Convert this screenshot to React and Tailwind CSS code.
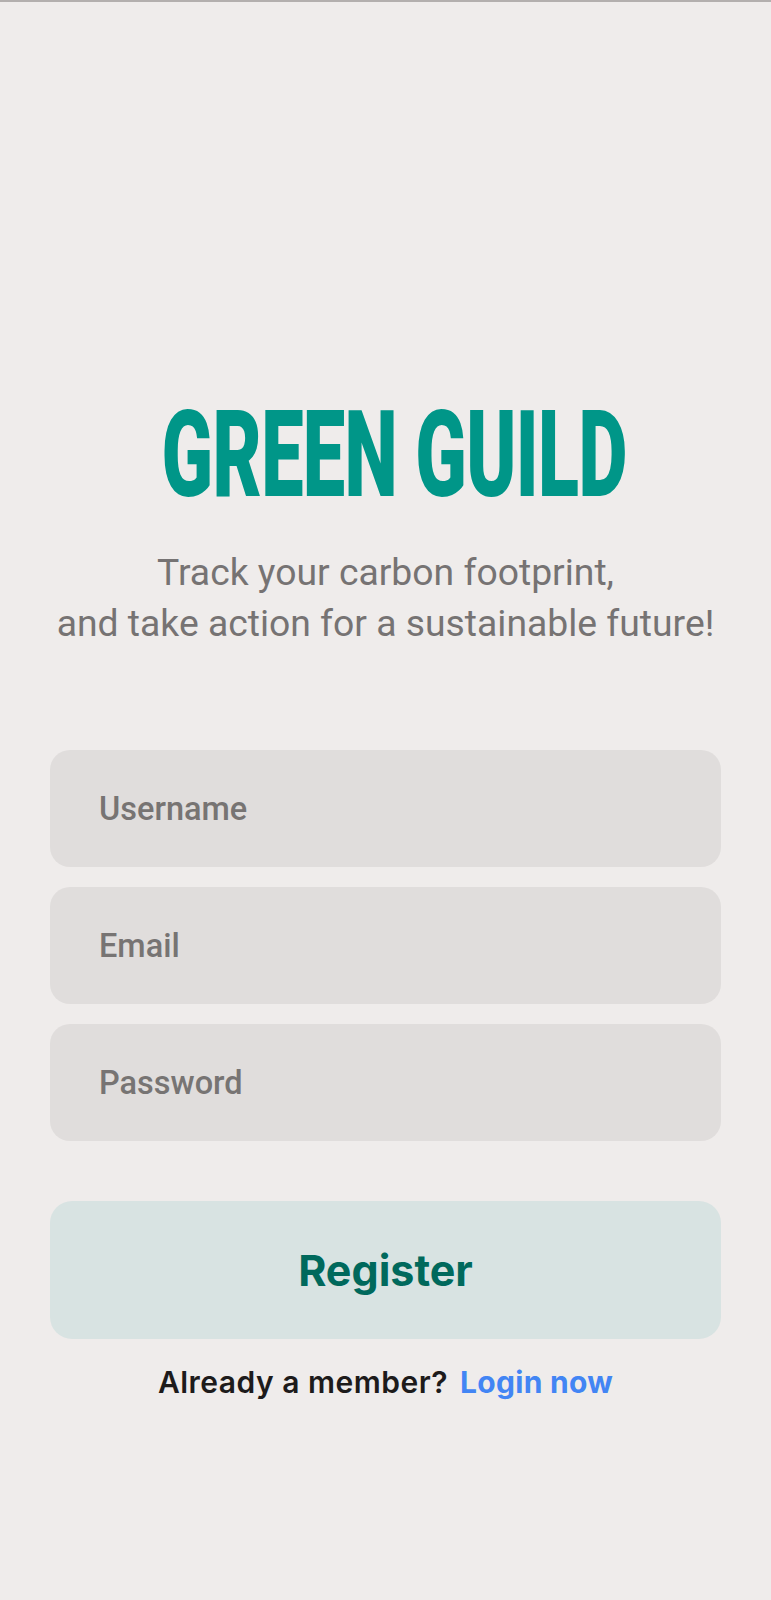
import React from 'react'

function Field({ placeholder, type = 'text' }) {
  return (
    <input
      type={type}
      placeholder={placeholder}
      className="w-full h-[117px] rounded-[20px] bg-[#e0dddc] pl-[49px] pr-6 text-[32.5px] font-medium text-[#3a3a3a] placeholder:text-[#777473] outline-none font-['Roboto',sans-serif]"
    />
  )
}

export default function App() {
  return (
    <div className="min-h-[1600px] w-full bg-[#efeceb] border-t-2 border-[#b3afae] flex flex-col items-center font-['Roboto',sans-serif]">

      {/* Title */}
      <h1 className="mt-[393px] ml-[18px] h-[121px] leading-[121px] text-[121px] font-black text-[#009688] scale-x-[0.625] whitespace-nowrap tracking-[-1px]">
        GREEN GUILD
      </h1>

      {/* Tagline */}
      <p className="mt-[31px] text-center text-[37.3px] leading-[51px] text-[#767373]">
        Track your carbon footprint,
        <br />
        and take action for a sustainable future!
      </p>

      {/* Form */}
      <div className="mt-[101px] w-full px-[50px] flex flex-col gap-5">
        <Field placeholder="Username" />
        <Field placeholder="Email" type="email" />
        <Field placeholder="Password" type="password" />
      </div>

      <div className="mt-[60px] w-full px-[50px]">
        <button className="w-full h-[138px] rounded-[22px] bg-[#d8e3e2] text-[43px] font-bold text-[#00695c] font-['Inter',sans-serif]">
          Register
        </button>
      </div>

      <div className="mt-[21px] flex items-center gap-3 text-[30px] font-['Inter',sans-serif]">
        <span className="text-[#1d1b1b] font-semibold tracking-[0.5px]">Already a member?</span>
        <span className="text-[#4285f4] font-bold tracking-[0.3px]">Login now</span>
      </div>
    </div>
  )
}
